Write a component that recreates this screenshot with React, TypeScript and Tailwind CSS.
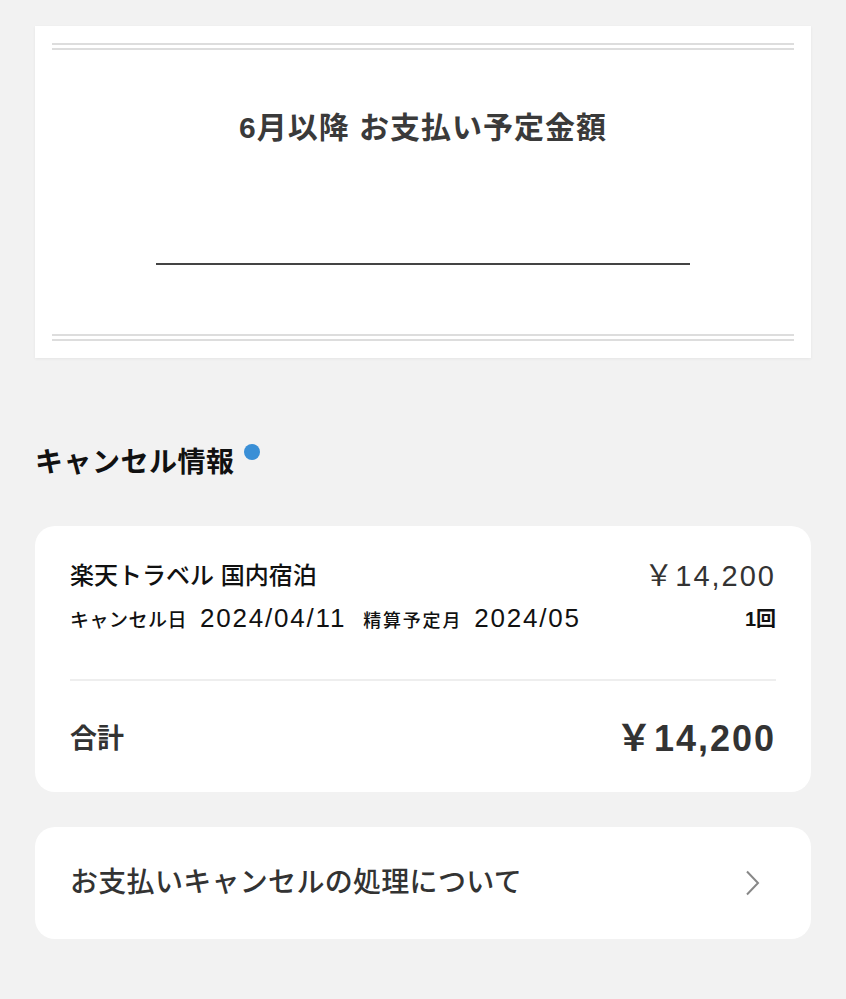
const font = "font-['Liberation_Sans','Noto_Sans_CJK_JP',sans-serif]";

function DoubleRule() {
  return (
    <div className="flex flex-col gap-[3px] px-[17px]">
      <div className="h-[2px] bg-[#dddddd]" />
      <div className="h-[2px] bg-[#dddddd]" />
    </div>
  );
}

export default function App() {
  return (
    <main className={`${font} min-h-screen bg-[#f2f2f2] px-[35px] pt-[26px] pb-[60px] text-[#333333]`}>
      <section className="flex flex-col bg-white pt-[17px] pb-[17px] shadow-[0_1px_3px_rgba(0,0,0,0.06)]">
        <DoubleRule />
        <h2 className="mt-[58px] text-center text-[30px] font-bold leading-[40px] tracking-[1px] text-[#3a3a3a]">
          6月以降 お支払い予定金額
        </h2>
        <div className="mx-auto mt-[115px] h-[2px] w-[534px] bg-[#444444]" />
        <div className="h-[69px]" />
        <DoubleRule />
      </section>

      <div className="mt-[85px] flex items-start">
        <h3 className="text-[28px] font-bold leading-[40px] tracking-[0.5px] text-[#111111]">キャンセル情報</h3>
        <span className="ml-[9px] mt-[1px] h-[16px] w-[16px] rounded-full bg-[#3a8fd6]" />
      </div>

      <section className="mt-[43px] rounded-[20px] bg-white px-[35px] pt-[32px] pb-[33px]">
        <div className="flex items-center justify-between">
          <p className="text-[24px] font-medium leading-[36px] text-[#111111]">楽天トラベル 国内宿泊</p>
          <p className="text-[29px] leading-[36px] tracking-[2px] text-[#333333]">￥14,200</p>
        </div>
        <div className="mt-[5px] flex items-center justify-between">
          <p className="flex items-baseline text-[#111111]">
            <span className="text-[19px] font-medium tracking-[0.5px]">キャンセル日</span>
            <span className="ml-[13px] text-[26px] font-medium tracking-[1.8px]">2024/04/11</span>
            <span className="ml-[17px] text-[18px] font-medium tracking-[1.8px]">精算予定月</span>
            <span className="ml-[12px] text-[26px] font-medium tracking-[1.8px]">2024/05</span>
          </p>
          <p className="text-[20px] font-bold text-[#111111]">1回</p>
        </div>
        <div className="mt-[41px] h-[2px] bg-[#eeeeee]" />
        <div className="mt-[38px] flex items-center justify-between">
          <p className="text-[27px] font-bold leading-[40px] text-[#333333]">合計</p>
          <p className="text-[36px] font-bold leading-[40px] tracking-[2px] text-[#333333]">￥14,200</p>
        </div>
      </section>

      <section className="mt-[35px] flex h-[112px] items-center justify-between rounded-[20px] bg-white pl-[35px] pr-[50px]">
        <p className="text-[28px] font-medium tracking-[0.3px] text-[#333333]">お支払いキャンセルの処理について</p>
        <svg width="16" height="26" viewBox="0 0 16 26" fill="none">
          <path d="M2 1.5 L13 13 L2 24.5" stroke="#888888" strokeWidth="2" />
        </svg>
      </section>
    </main>
  );
}
